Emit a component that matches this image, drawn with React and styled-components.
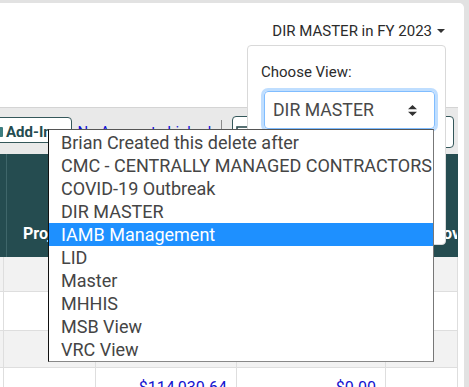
import React from 'react';
import styled, { createGlobalStyle } from 'styled-components';

const GlobalStyle = createGlobalStyle`
  html, body {
    margin: 0;
    padding: 0;
    background: #e2e2e2;
    font-family: Roboto, "Liberation Sans", sans-serif;
    overflow: hidden;
  }
`;

const Card = styled.div`
  position: relative;
  margin-top: 3px;
  width: 464px;
  height: calc(100vh - 3px);
  background: #fff;
  border-top-right-radius: 5px;
  overflow: hidden;
`;

const CardHeader = styled.div`
  height: 104px;
  box-sizing: border-box;
  display: flex;
  justify-content: flex-end;
  align-items: flex-start;
  padding: 18px 19px 0 0;
`;

const Toggle = styled.div`
  display: flex;
  align-items: center;
  font-size: 15px;
  line-height: 20px;
  color: #2b2b2b;
`;

const Caret = styled.span`
  margin-left: 5px;
  width: 0;
  height: 0;
  border-left: 4px solid transparent;
  border-right: 4px solid transparent;
  border-top: 4px solid #333;
`;

const Toolbar = styled.div`
  height: 47px;
  box-sizing: border-box;
  margin-right: 6px;
  border-top: 1px solid #d4d4d4;
  background: #e9e9e9;
  display: flex;
  align-items: flex-start;
  padding-top: 9px;

  & > * {
    flex-shrink: 0;
  }
`;

const AddButton = styled.div`
  margin-left: -12px;
  height: 26px;
  box-sizing: border-box;
  border: 1px solid #34575a;
  border-radius: 4px;
  background: #fff;
  display: flex;
  align-items: center;
  gap: 3px;
  padding: 3px 12px 0 4px;
  font-size: 15px;
  font-weight: 700;
  color: #244c50;
`;

const AddIcon = styled.span`
  flex-shrink: 0;
  width: 10px;
  height: 10px;
  background: #3b7d80;
  border-radius: 1px;
`;

const AccountLink = styled.a`
  margin: 6px 0 0 5px;
  font-size: 15px;
  line-height: 18px;
  color: #1212d8;
  text-decoration: underline;
`;

const Divider = styled.span`
  margin: 3px 0 0 10px;
  width: 1px;
  height: 24px;
  background: #8a8a8a;
`;

const FilterBox = styled.div`
  margin: -1px 0 0 10px;
  width: 222px;
  height: 32px;
  box-sizing: border-box;
  border: 1px solid #34575a;
  border-radius: 4px;
  background: #fff;
  padding: 6px 0 0 3px;
`;

const HeaderRow = styled.div`
  margin-right: 6px;
  height: 103px;
  background: #254c50;
  display: grid;
  grid-template-columns: 7px 392px 1fr;
  overflow: hidden;
`;

const HeadCell = styled.div`
  display: flex;
  align-items: flex-end;
  padding: 0 0 14px ${p => p.$pad || 0}px;
  border-right: 1px solid ${p => (p.$line ? '#3f666a' : 'transparent')};
  color: #fff;
  font-size: 16px;
  font-weight: 700;
  line-height: 18px;
  white-space: nowrap;
  overflow: hidden;
`;

const BodyRow = styled.div`
  margin-right: 6px;
  height: ${p => p.$h}px;
  box-sizing: border-box;
  background: ${p => (p.$striped ? '#f2f2f2' : '#fff')};
  border-bottom: 1px solid #dedede;
  display: grid;
  grid-template-columns: 4px 92px 141px 149px 1fr;
`;

const Cell = styled.div`
  min-width: 0;
  border-right: 1px solid #dedede;
  text-align: right;
  padding: ${p => (p.$text ? '10px 9px 0 0' : '0')};
  font-size: 16px;
  line-height: 20px;
  color: #1414d0;
  white-space: nowrap;
`;

const Popover = styled.div`
  position: absolute;
  left: 247px;
  top: 42px;
  width: 199px;
  height: 200px;
  box-sizing: border-box;
  background: #fff;
  border: 1px solid #d9d9d9;
  border-radius: 4px;
  padding: 17px 0 0 13px;
`;

const Label = styled.div`
  font-size: 15px;
  line-height: 18px;
  color: #2b2b2b;
`;

const SelectBox = styled.div`
  margin: 10px 0 0 3px;
  width: 171px;
  height: 38px;
  box-sizing: border-box;
  border: 1px solid #80bdff;
  border-radius: 4px;
  box-shadow: 0 0 0 3px rgba(0, 123, 255, 0.25);
  display: flex;
  align-items: center;
  justify-content: space-between;
  padding: 0 17px 0 8px;
  font-size: 17.7px;
  color: #494949;
`;

const OptionList = styled.ul`
  position: absolute;
  left: 48px;
  top: 126px;
  width: 386px;
  height: 233px;
  box-sizing: border-box;
  margin: 0;
  padding: 1px 0 0;
  list-style: none;
  background: #fff;
  border-top: 1px solid #555;
  border-left: 1px solid #111;
  border-right: 1px solid #777;
  border-bottom: 1px solid #888;
`;

const Option = styled.li`
  height: 23px;
  line-height: 23px;
  padding-left: 12px;
  font-size: 18px;
  white-space: nowrap;
  color: ${p => (p.$active ? '#fff' : '#454545')};
  background: ${p => (p.$active ? '#1e90ff' : 'transparent')};
`;

const views = [
  'Brian Created this delete after',
  'CMC - CENTRALLY MANAGED CONTRACTORS',
  'COVID-19 Outbreak',
  'DIR MASTER',
  'IAMB Management',
  'LID',
  'Master',
  'MHHIS',
  'MSB View',
  'VRC View',
];

const rows = [
  { h: 35, striped: true },
  { h: 39, striped: false },
  { h: 37, striped: true },
];

export default function App() {
  return (
    <>
      <GlobalStyle />
      <Card>
        <CardHeader>
          <Toggle>
            DIR MASTER in FY 2023
            <Caret />
          </Toggle>
        </CardHeader>

        <Toolbar>
          <AddButton>
            <AddIcon />
            Add-Ins
          </AddButton>
          <AccountLink>No Accounts Linked</AccountLink>
          <Divider />
          <FilterBox>
            <svg width="14" height="12" viewBox="0 0 14 12">
              <rect x="1" y="1" width="12" height="10" fill="none" stroke="#2f4f52" strokeWidth="1.6" />
              <path d="M1 4h12M7 4v7" stroke="#2f4f52" strokeWidth="1.6" />
            </svg>
          </FilterBox>
        </Toolbar>

        <HeaderRow>
          <HeadCell $line />
          <HeadCell $pad={16}>Project</HeadCell>
          <HeadCell $pad={10}>Approved</HeadCell>
        </HeaderRow>

        {rows.map((r, i) => (
          <BodyRow key={i} $h={r.h} $striped={r.striped}>
            <Cell />
            <Cell />
            <Cell />
            <Cell />
            <Cell />
          </BodyRow>
        ))}
        <BodyRow $h={40}>
          <Cell />
          <Cell />
          <Cell $text>$114,030.64</Cell>
          <Cell $text>$0.00</Cell>
          <Cell />
        </BodyRow>

        <Popover>
          <Label>Choose View:</Label>
          <SelectBox>
            DIR MASTER
            <svg width="9" height="11" viewBox="0 0 9 11">
              <path d="M4.5 0L9 4.2H0z M0 6.8h9L4.5 11z" fill="#333" />
            </svg>
          </SelectBox>
        </Popover>

        <OptionList>
          {views.map(v => (
            <Option key={v} $active={v === 'IAMB Management'}>
              {v}
            </Option>
          ))}
        </OptionList>
      </Card>
    </>
  );
}
